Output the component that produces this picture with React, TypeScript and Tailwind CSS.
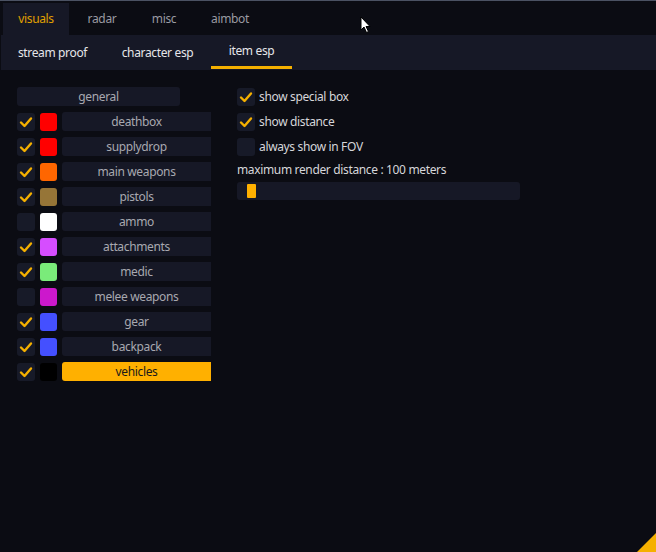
const items = [
    { name: 'deathbox', on: true, color: 'bg-[#ff0000]' },
    { name: 'supplydrop', on: true, color: 'bg-[#ff0000]' },
    { name: 'main weapons', on: true, color: 'bg-[#ff6600]' },
    { name: 'pistols', on: true, color: 'bg-[#967537]' },
    { name: 'ammo', on: false, color: 'bg-white' },
    { name: 'attachments', on: true, color: 'bg-[#d64dff]' },
    { name: 'medic', on: true, color: 'bg-[#7aeb7a]' },
    { name: 'melee weapons', on: false, color: 'bg-[#cc18cc]' },
    { name: 'gear', on: true, color: 'bg-[#4450ff]' },
    { name: 'backpack', on: true, color: 'bg-[#4450ff]' },
    { name: 'vehicles', on: true, color: 'bg-black', active: true },
];

function Check({ on }: { on: boolean }) {
    return (
        <div className="w-[18px] h-[18px] rounded-[3px] bg-[#171a28] flex items-center justify-center shrink-0">
            {on && (
                <svg width="14" height="12" viewBox="0 0 14 12">
                    <path d="M2 6.5 L5.5 10 L12 2.5" fill="none" stroke="#f5b000" strokeWidth="2.4" strokeLinecap="round" strokeLinejoin="round" />
                </svg>
            )}
        </div>
    );
}

export default function App() {
    return (
        <div
            className="relative w-[656px] h-[552px] overflow-hidden bg-[#0b0c13] text-[12px] leading-none tracking-[-0.35px]"
            style={{ fontFamily: '"Noto Sans", "Open Sans", sans-serif' }}
        >
            <div className="h-[1px] bg-[#4b5263]" />

            {/* Top tabs */}
            <div className="flex h-[34px] pt-[2px]">
                <div className="w-[3px]" />
                <div className="w-[66px] bg-[#161826] flex items-center justify-center text-[#e0a000]">visuals</div>
                <div className="w-[66px] flex items-center justify-center text-[#9a9aa2]">radar</div>
                <div className="w-[58px] flex items-center justify-center text-[#9a9aa2]">misc</div>
                <div className="w-[74px] flex items-center justify-center text-[#9a9aa2]">aimbot</div>
            </div>

            {/* Sub tabs */}
            <div className="flex h-[35px] ml-[1px] bg-[#161826] text-[#e6e6ea]">
                <div className="w-[103px] flex items-center justify-center">stream proof</div>
                <div className="w-[107px] flex items-center justify-center">character esp</div>
                <div className="w-[81px] flex flex-col">
                    <div className="flex-1 flex items-center justify-center">item esp</div>
                    <div className="h-[3px] bg-[#f5b000] mb-[1px]" />
                </div>
            </div>

            {/* Content */}
            <div className="flex pt-[17px]">
                <div className="ml-[17px] w-[194px] flex flex-col gap-[7px]">
                    <div className="w-[163px] h-[19px] rounded-[3px] bg-[#161826] text-[#a8a8b0] flex items-center justify-center">general</div>
                    <div className="flex flex-col gap-[6px] -mt-[1px]">
                        {items.map((it) => (
                            <div key={it.name} className="flex items-center h-[19px]">
                                <Check on={it.on} />
                                <div className={`${it.color} w-[17px] h-[18px] rounded-[3px] ml-[5px] shrink-0`} />
                                <div
                                    className={`ml-[5px] flex-1 h-[19px] rounded-l-[3px] flex items-center justify-center ${
                                        it.active ? 'bg-[#ffb000] text-[#1a1a1a]' : 'bg-[#161826] text-[#a8a8b0]'
                                    }`}
                                >
                                    {it.name}
                                </div>
                            </div>
                        ))}
                    </div>
                </div>

                <div className="ml-[26px] w-[283px] flex flex-col">
                    <div className="flex flex-col gap-[7px] mt-[1px]">
                        {[
                            { label: 'show special box', on: true },
                            { label: 'show distance', on: true },
                            { label: 'always show in FOV', on: false },
                        ].map((r) => (
                            <div key={r.label} className="flex items-center gap-[4px] h-[18px] text-[#d6d6da]">
                                <Check on={r.on} />
                                <span>{r.label}</span>
                            </div>
                        ))}
                    </div>
                    <div className="mt-[7px] h-[14px] flex items-center text-[#d6d6da]">maximum render distance : 100 meters</div>
                    <div className="mt-[5px] h-[18px] rounded-[3px] bg-[#161826] flex items-center pl-[10px]">
                        <div className="w-[9px] h-[14px] rounded-[1px] bg-[#ffb000]" />
                    </div>
                </div>
            </div>

            {/* resize grip */}
            <svg className="absolute right-0 bottom-0" width="19" height="19" viewBox="0 0 19 19">
                <path d="M19 0 L19 19 L0 19 Z" fill="#f5b000" />
            </svg>

            {/* mouse cursor */}
            <svg className="absolute left-[360px] top-[16px]" width="12" height="18" viewBox="0 0 12 18">
                <path d="M1 1 L1 14 L4 11 L6.5 16.5 L8.5 15.5 L6 10.5 L10 10.5 Z" fill="white" stroke="black" strokeWidth="1" strokeLinejoin="round" />
            </svg>
        </div>
    );
}
